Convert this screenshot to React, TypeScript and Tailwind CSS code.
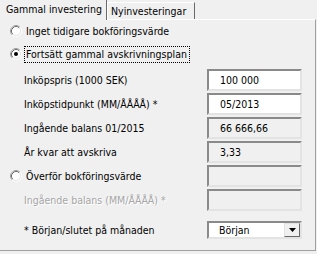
import React from "react"

const FONT = "font-['DejaVu_Sans_Condensed','DejaVu_Sans',sans-serif] [font-stretch:condensed]"

function Radio({ checked }: { checked?: boolean }) {
  return (
    <svg width="12" height="12" viewBox="0 0 12 12" className="shrink-0">
      <circle cx="6" cy="6" r="5" fill="#ffffff" />
      <path d="M2.11 9.89 A5.5 5.5 0 0 1 9.89 2.11" fill="none" stroke="#a0a0a0" strokeWidth="1" />
      <path d="M9.89 2.11 A5.5 5.5 0 0 1 2.11 9.89" fill="none" stroke="#ffffff" strokeWidth="1" />
      <path d="M2.82 9.18 A4.5 4.5 0 0 1 9.18 2.82" fill="none" stroke="#696969" strokeWidth="1" />
      <path d="M9.18 2.82 A4.5 4.5 0 0 1 2.82 9.18" fill="none" stroke="#e3e3e3" strokeWidth="1" />
      {checked && <circle cx="6" cy="6" r="2" fill="#000000" />}
    </svg>
  )
}

function Field({ value, white }: { value?: string; white?: boolean }) {
  return (
    <div
      className={`w-[95px] h-[22px] flex items-center pl-[11px] border-2 border-t-[#8a8a8a] border-l-[#8a8a8a] border-r-[#e3e3e3] border-b-[#e3e3e3] ${
        white ? "bg-white" : "bg-[#f0f0f0]"
      }`}
    >
      {value}
    </div>
  )
}

function Row({ label, children, disabled }: { label: React.ReactNode; children: React.ReactNode; disabled?: boolean }) {
  return (
    <div className="h-[22px] flex items-center justify-between pl-[24px]">
      <span className={disabled ? "text-[#a6a6a6] [text-shadow:1px_1px_0_#ffffff]" : ""}>{label}</span>
      {children}
    </div>
  )
}

export default function App() {
  return (
    <div className={`w-[317px] h-[254px] bg-[#f0f0f0] text-black text-[10.5px] leading-none overflow-hidden ${FONT}`}>
      {/* tabs */}
      <div className="flex h-[19px] items-end">
        <div className="relative z-10 w-[107px] h-[20px] self-start flex items-center pl-[6px] bg-[#f0f0f0] border-r border-r-[#696969] pb-[1px]">
          Gammal investering
        </div>
        <div className="w-[88px] h-[17px] flex items-center pl-[3px] border-r border-r-[#696969] border-l border-l-white border-t border-t-white">
          Nyinvesteringar
        </div>
      </div>

      {/* panel */}
      <div className="w-[316px] h-[232px] border-t border-t-white border-r border-r-[#a0a0a0] border-b border-b-[#a0a0a0] flex flex-col">
        <div className="h-[22px] flex items-center pl-[10px] gap-[4px]">
          <Radio />
          <span>Inget tidigare bokföringsvärde</span>
        </div>
        <div className="mt-[1px] h-[22px] flex items-center pl-[10px] gap-[2px]">
          <Radio checked />
          <span className="h-[17px] flex items-center pl-[1px] pr-[2px] border border-dotted border-black">
            Fortsätt gammal avskrivningsplan
          </span>
        </div>

        <div className="mt-[4px] pr-[13px] flex flex-col gap-[2px]">
          <Row label="Inköpspris (1000 SEK)">
            <Field value="100 000" white />
          </Row>
          <Row label="Inköpstidpunkt (MM/ÅÅÅÅ) *">
            <Field value="05/2013" white />
          </Row>
          <Row label="Ingående balans 01/2015">
            <Field value="66 666,66" />
          </Row>
          <Row label="År kvar att avskriva">
            <Field value="3,33" />
          </Row>
          <div className="h-[22px] flex items-center justify-between pl-[10px]">
            <div className="flex items-center gap-[4px]">
              <Radio />
              <span>Överför bokföringsvärde</span>
            </div>
            <Field />
          </div>
          <Row label="Ingående balans (MM/ÅÅÅÅ) *" disabled>
            <Field />
          </Row>
        </div>

        <div className="mt-[10px] pr-[13px] h-[18px] flex items-center justify-between pl-[24px]">
          <span>* Början/slutet på månaden</span>
          <div className="w-[95px] h-[18px] flex items-center justify-between bg-white border-2 border-t-[#8a8a8a] border-l-[#8a8a8a] border-r-[#e3e3e3] border-b-[#e3e3e3]">
            <span className="pl-[10px]">Början</span>
            <div className="w-[16px] h-full flex items-center justify-center bg-[#f0f0f0] border border-t-[#e3e3e3] border-l-[#e3e3e3] border-r-[#696969] border-b-[#696969]">
              <svg width="7" height="4" viewBox="0 0 7 4">
                <path d="M0 0 H7 L3.5 4 Z" fill="#000000" />
              </svg>
            </div>
          </div>
        </div>
      </div>
    </div>
  )
}
